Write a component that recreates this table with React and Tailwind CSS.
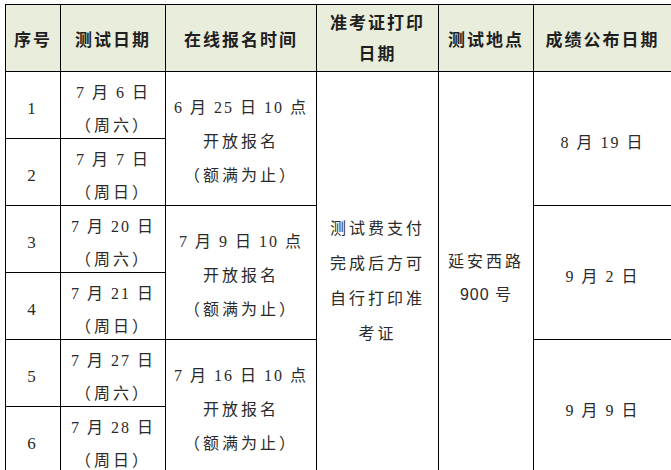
import React from "react";

const rows = [
  { no: "1", date: "7 月 6 日", week: "（周六）" },
  { no: "2", date: "7 月 7 日", week: "（周日）" },
  { no: "3", date: "7 月 20 日", week: "（周六）" },
  { no: "4", date: "7 月 21 日", week: "（周日）" },
  { no: "5", date: "7 月 27 日", week: "（周六）" },
  { no: "6", date: "7 月 28 日", week: "（周日）" },
];

const signup = ["6 月 25 日 10 点", "7 月 9 日 10 点", "7 月 16 日 10 点"];
const results = ["8 月 19 日", "9 月 2 日", "9 月 9 日"];

const App = () => {
  const cell = "border border-black text-center align-middle p-0";
  return (
    <div
      className="w-[671px] h-[470px] overflow-hidden bg-white pl-[5px] pt-[4px] text-[#2a2a2a]"
      style={{ fontFamily: '"Liberation Serif", "Noto Sans CJK SC", serif' }}
    >
      <table className="table-fixed border-collapse w-[666px]">
        <colgroup>
          <col className="w-[55px]" />
          <col className="w-[105px]" />
          <col className="w-[151px]" />
          <col className="w-[122px]" />
          <col className="w-[95px]" />
          <col className="w-[138px]" />
        </colgroup>
        <thead>
          <tr className="h-[67px] bg-[#e9eedc] text-[17px] font-bold tracking-[2px] text-[#1f1f1f]">
            <th className={`${cell} pt-[6px]`}>序号</th>
            <th className={`${cell} pt-[6px]`}>测试日期</th>
            <th className={`${cell} pt-[6px]`}>在线报名时间</th>
            <th className={`${cell} leading-[31px] pt-[2px]`}>
              准考证打印
              <br />
              日期
            </th>
            <th className={`${cell} pt-[6px]`}>测试地点</th>
            <th className={`${cell} pt-[6px]`}>成绩公布日期</th>
          </tr>
        </thead>
        <tbody className="text-[16px] tracking-[3px]">
          {rows.map((r, i) => (
            <tr key={r.no} className="h-[67px]">
              <td className={`${cell} text-[17px] pt-[8px]`}>{r.no}</td>
              <td className={`${cell} leading-[33px]`}>
                <div className="translate-y-[4px]">
                  <span className="tracking-[2px]">{r.date}</span>
                  <br />
                  {r.week}
                </div>
              </td>
              {i % 2 === 0 && (
                <td rowSpan={2} className={`${cell} leading-[34px] pt-[6px]`}>
                  <span className="tracking-[2px]">{signup[i / 2]}</span>
                  <br />
                  开放报名
                  <br />
                  （额满为止）
                </td>
              )}
              {i === 0 && (
                <td rowSpan={6} className={`${cell} leading-[35px] pt-[16px]`}>
                  测试费支付
                  <br />
                  完成后方可
                  <br />
                  自行打印准
                  <br />
                  考证
                </td>
              )}
              {i === 0 && (
                <td rowSpan={6} className={`${cell} leading-[33px] pt-[10px]`}>
                  延安西路
                  <br />
                  <span className="tracking-[1px]" style={{ fontFamily: '"Liberation Sans", "Noto Sans CJK SC", sans-serif' }}>
                    900 号
                  </span>
                </td>
              )}
              {i % 2 === 0 && (
                <td rowSpan={2} className={`${cell} tracking-[2px] pt-[8px]`}>
                  {results[i / 2]}
                </td>
              )}
            </tr>
          ))}
        </tbody>
      </table>
    </div>
  );
};

export default App;
